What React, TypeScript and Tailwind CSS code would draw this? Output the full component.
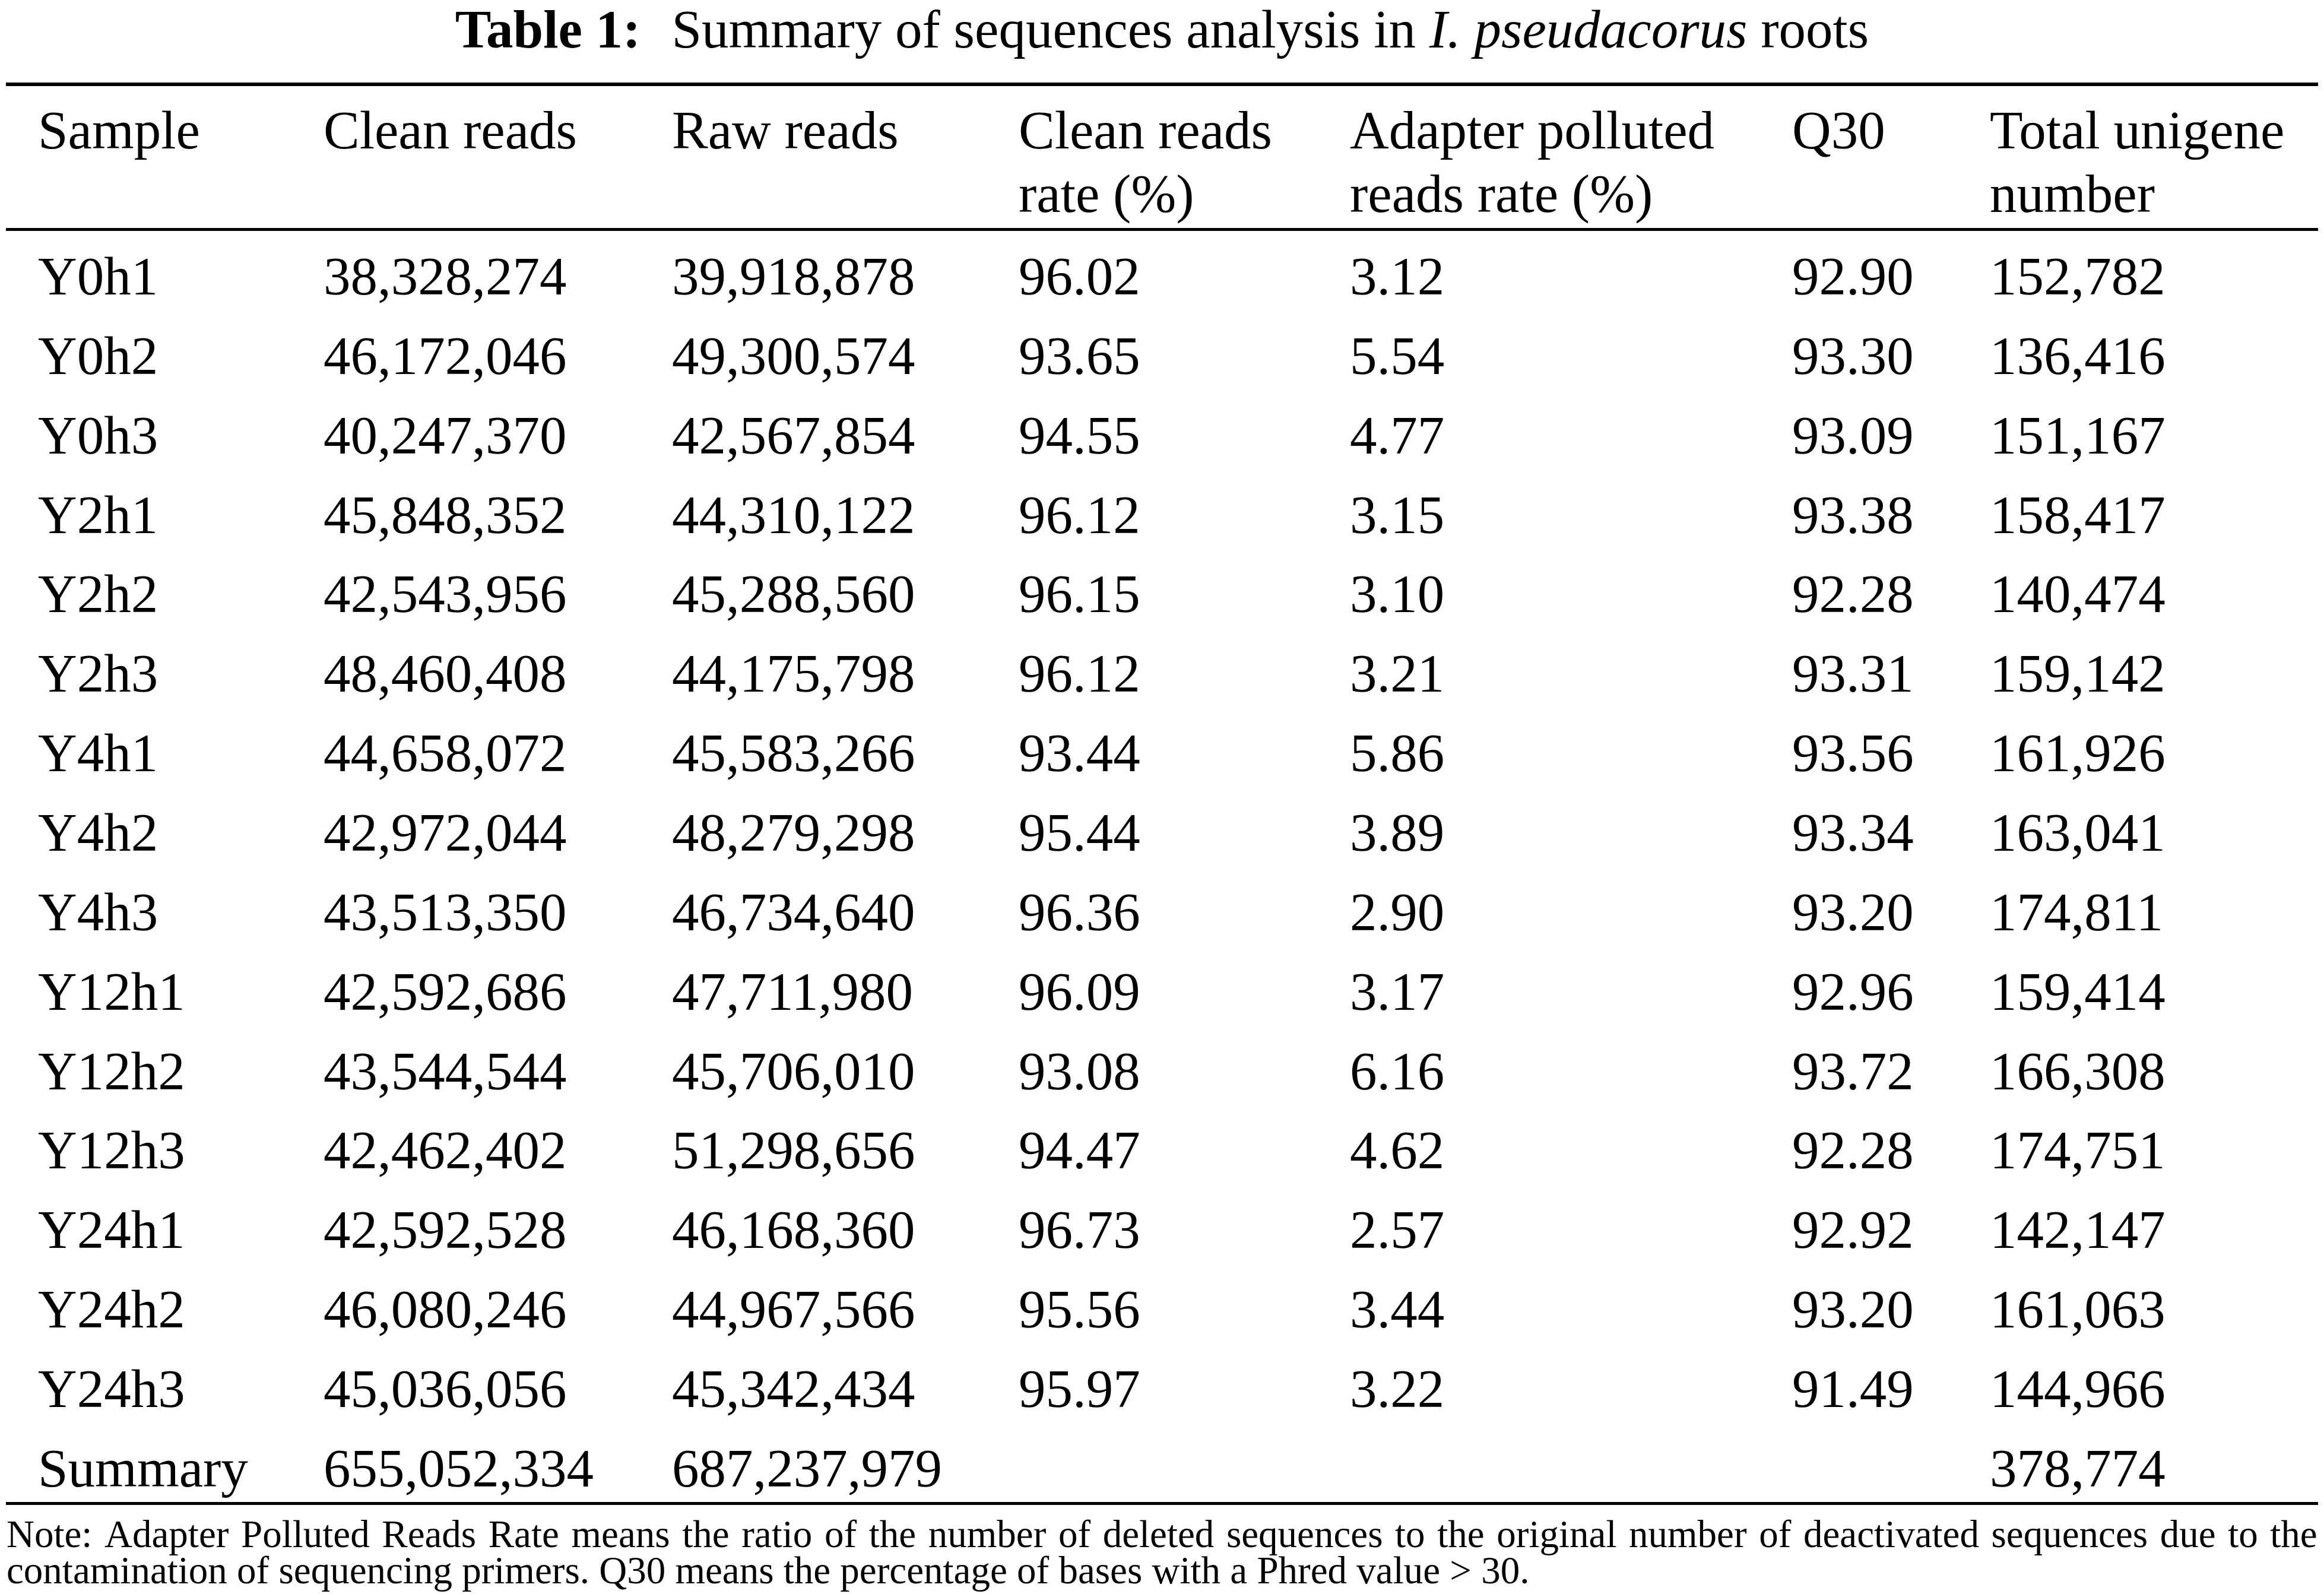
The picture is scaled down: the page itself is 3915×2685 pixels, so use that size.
import React from "react";

const rows: string[][] = [
  ["Y0h1", "38,328,274", "39,918,878", "96.02", "3.12", "92.90", "152,782"],
  ["Y0h2", "46,172,046", "49,300,574", "93.65", "5.54", "93.30", "136,416"],
  ["Y0h3", "40,247,370", "42,567,854", "94.55", "4.77", "93.09", "151,167"],
  ["Y2h1", "45,848,352", "44,310,122", "96.12", "3.15", "93.38", "158,417"],
  ["Y2h2", "42,543,956", "45,288,560", "96.15", "3.10", "92.28", "140,474"],
  ["Y2h3", "48,460,408", "44,175,798", "96.12", "3.21", "93.31", "159,142"],
  ["Y4h1", "44,658,072", "45,583,266", "93.44", "5.86", "93.56", "161,926"],
  ["Y4h2", "42,972,044", "48,279,298", "95.44", "3.89", "93.34", "163,041"],
  ["Y4h3", "43,513,350", "46,734,640", "96.36", "2.90", "93.20", "174,811"],
  ["Y12h1", "42,592,686", "47,711,980", "96.09", "3.17", "92.96", "159,414"],
  ["Y12h2", "43,544,544", "45,706,010", "93.08", "6.16", "93.72", "166,308"],
  ["Y12h3", "42,462,402", "51,298,656", "94.47", "4.62", "92.28", "174,751"],
  ["Y24h1", "42,592,528", "46,168,360", "96.73", "2.57", "92.92", "142,147"],
  ["Y24h2", "46,080,246", "44,967,566", "95.56", "3.44", "93.20", "161,063"],
  ["Y24h3", "45,036,056", "45,342,434", "95.97", "3.22", "91.49", "144,966"],
];

const summary = ["Summary", "655,052,334", "687,237,979", "", "", "", "378,774"];

const gridCols = "grid grid-cols-[535px_587px_584px_558px_745px_333px_1fr]";

function Row({ cells, last }: { cells: string[]; last?: boolean }) {
  return (
    <div className={`${gridCols} ${last ? "h-[123px]" : "h-[133.87px]"} leading-[133.87px] whitespace-nowrap`}>
      {cells.map((c, i) => (
        <div key={i} className={i === 0 ? "pl-[54px]" : ""}>
          {c}
        </div>
      ))}
    </div>
  );
}

const noteLine1 =
  "Note: Adapter Polluted Reads Rate means the ratio of the number of deleted sequences to the original number of deactivated sequences due to the";

export default function App() {
  return (
    <div className="w-[3915px] h-[2685px] overflow-hidden bg-white text-black font-['Liberation_Serif','Times_New_Roman',serif]">
      <div className="h-[139px] text-center text-[91px] leading-[100px] whitespace-nowrap">
        <span className="font-bold">Table 1:</span>
        <span className="ml-[52px]">Summary of sequences analysis in </span>
        <span className="italic">I. pseudacorus</span>
        <span> roots</span>
      </div>

      <div className="mx-[10px] w-[3895px] border-t-[6px] border-b-[5px] border-black text-[91px]">
        <div className={`${gridCols} pt-[21px] pb-[4px] leading-[107px] border-b-[5px] border-black whitespace-nowrap`}>
          <div className="pl-[54px]">Sample</div>
          <div>Clean reads</div>
          <div>Raw reads</div>
          <div>
            Clean reads
            <br />
            rate (%)
          </div>
          <div>
            Adapter polluted
            <br />
            reads rate (%)
          </div>
          <div>Q30</div>
          <div>
            Total unigene
            <br />
            number
          </div>
        </div>
        <div className="pt-[10px]">
          {rows.map((r) => (
            <Row key={r[0]} cells={r} />
          ))}
          <Row cells={summary} last />
        </div>
      </div>

      <div className="ml-[11px] w-[3893px] mt-[19px] text-[65px] leading-[61px]">
        <div className="whitespace-nowrap flex justify-between">
          {noteLine1.split(" ").map((w, i) => (
            <span key={i}>{w}</span>
          ))}
        </div>
        <div className="whitespace-nowrap">
          contamination of sequencing primers. Q30 means the percentage of bases with a Phred value &gt; 30.
        </div>
      </div>
    </div>
  );
}
